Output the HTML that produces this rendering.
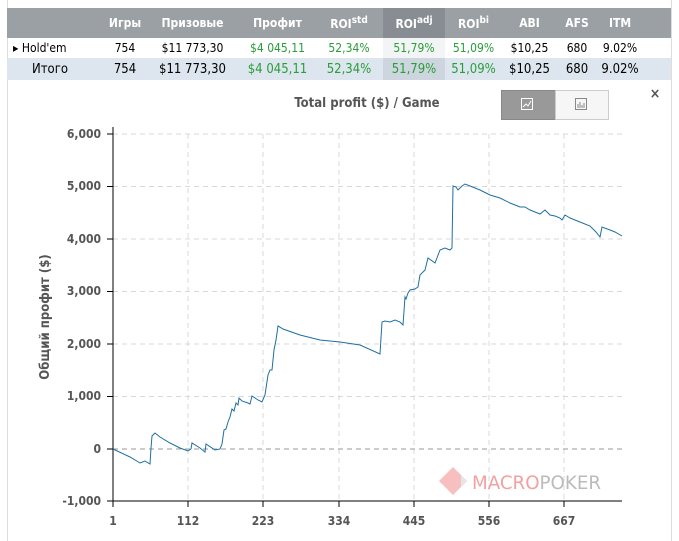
<!DOCTYPE html>
<html><head><meta charset="utf-8"><style>
body{margin:0;width:679px;height:541px;background:#fff;font-family:"DejaVu Sans Condensed","Liberation Sans",sans-serif;overflow:hidden;position:relative}
.panel{position:absolute;left:7px;top:0;width:663px;height:541px;border-left:1px solid #ddd;border-right:1px solid #ddd}
table{position:absolute;left:7px;top:8px;width:664px;border-collapse:collapse;font-size:12px;table-layout:fixed}
th{background:#9ba0a4;color:#fff;font-weight:bold;height:30px;font-size:12px;padding:0}
td{height:20px;text-align:center;color:#000;padding:0}
tr.t td{background:#dde6ee;height:22px;font-size:13px}
.g{color:#2a9d3a}
.hl{background:#878d92 !important}
td.hl2{background:#f3f4f5}
tr.t td.hl2{background:#cdd6de}
sup{font-size:10px}
</style></head><body>
<div class="panel"></div>
<table>
<colgroup><col style="width:98px"><col style="width:40px"><col style="width:95px"><col style="width:75px"><col style="width:68px"><col style="width:62px"><col style="width:57px"><col style="width:55px"><col style="width:40px"><col></colgroup>
<tr><th></th><th>Игры</th><th>Призовые</th><th>Профит</th><th>ROI<sup>std</sup></th><th class="hl">ROI<sup>adj</sup></th><th>ROI<sup>bi</sup></th><th>ABI</th><th>AFS</th><th style="padding-right:28px">ITM</th></tr>
<tr><td style="text-align:left;padding-left:6px">▸ Hold'em</td><td>754</td><td>$11 773,30</td><td class="g">$4 045,11</td><td class="g">52,34%</td><td class="g hl2">51,79%</td><td class="g">51,09%</td><td>$10,25</td><td>680</td><td style="padding-right:28px">9.02%</td></tr>
<tr class="t"><td style="text-align:left;padding-left:25px">Итого</td><td>754</td><td>$11 773,30</td><td class="g">$4 045,11</td><td class="g">52,34%</td><td class="g hl2">51,79%</td><td class="g">51,09%</td><td>$10,25</td><td>680</td><td style="padding-right:28px">9.02%</td></tr>
</table>
<svg width="679" height="541" style="position:absolute;left:0;top:0" font-family="DejaVu Sans Condensed,Liberation Sans,sans-serif">
<text x="367" y="107" text-anchor="middle" font-size="13" font-weight="bold" fill="#555">Total profit ($) / Game</text>
<rect x="501.5" y="90.5" width="54" height="29" fill="#999" stroke="#888"/>
<rect x="555.5" y="90.5" width="53" height="29" fill="#f6f6f6" stroke="#ccc"/>
<rect x="521.5" y="98.5" width="11" height="11" fill="none" stroke="#fff"/>
<path d="M523 107l3-3 2 2 3-5" fill="none" stroke="#fff"/>
<rect x="575.5" y="98.5" width="11" height="11" fill="none" stroke="#888"/>
<path d="M578 108v-4M580 108v-6M582 108v-3M584 108v-5" stroke="#888"/>
<text x="655" y="98" text-anchor="middle" font-size="14" font-weight="bold" fill="#555">×</text>
<g stroke="#d8d8d8" stroke-dasharray="5,4">
<path d="M113 134H622M113 186.5H622M113 239H622M113 291.5H622M113 344H622M113 396.5H622"/>
<path d="M188 134V501M263 134V501M339 134V501M414 134V501M489 134V501M564 134V501"/>
</g>
<path d="M113 449H622" stroke="#999" stroke-dasharray="5,4"/>
<path d="M113 127V501H622" stroke="#000" fill="none"/>
<g stroke="#000"><path d="M107 134h6M107 186.5h6M107 239h6M107 291.5h6M107 344h6M107 396.5h6M107 449h6M107 501h6M113 501v6M188 501v6M263 501v6M339 501v6M414 501v6M489 501v6M564 501v6"/></g>
<g font-size="12" font-weight="bold" fill="#555" text-anchor="end">
<text x="101" y="138">6,000</text><text x="101" y="190">5,000</text><text x="101" y="243">4,000</text><text x="101" y="295">3,000</text><text x="101" y="348">2,000</text><text x="101" y="400">1,000</text><text x="101" y="453">0</text><text x="101" y="505">-1,000</text>
</g>
<g font-size="12" font-weight="bold" fill="#555" text-anchor="middle">
<text x="113" y="525">1</text><text x="188" y="525">112</text><text x="263" y="525">223</text><text x="339" y="525">334</text><text x="414" y="525">445</text><text x="489" y="525">556</text><text x="564" y="525">667</text>
</g>
<text transform="translate(49,317) rotate(-90)" text-anchor="middle" font-size="13" font-weight="bold" fill="#555">Общий профит ($)</text>
<g opacity="0.5"><path d="M453 467l14 14-14 14-14-14z" fill="#f08080"/><path d="M467 481l-6-6v12z" fill="#ccc"/></g>
<text x="472" y="489" font-size="19" fill="#f4a0a0" textLength="129" lengthAdjust="spacingAndGlyphs">MACRO<tspan fill="#bbb">POKER</tspan></text>
<polyline fill="none" stroke="#1f6fa0" stroke-width="1" points="113,449 130,457 140,463 145,461 150,464 151,448 152,436 155,433 160,437 170,443 180,448 188,451 191,449 192,443 200,448 205,452 206,444 215,450 220,449 222,444 224,430 226,429 228,422 230,417 232,409 234,411 236,403 238,405 239,398 242,401 248,403 250,404 252,396 258,400 262,402 265,395 268,375 270,370 272,370 274,350 276,340 278,326 283,329 300,335 320,340 340,342 360,345 380,354 382,322 385,321 390,322 395,320 400,322 403,325 405,297 406,299 408,293 410,290 415,289 418,287 420,275 425,270 428,258 435,263 440,250 445,248 450,250 452,248 453,186 456,187 458,190 462,186 465,184 470,186 480,190 490,195 500,198 510,203 520,207 525,207 530,210 535,212 540,214 545,210 550,215 555,216 560,218 562,220 565,215 570,218 580,222 590,226 596,232 600,237 602,227 610,230 615,232 622,236"/>
</svg>
</body></html>
